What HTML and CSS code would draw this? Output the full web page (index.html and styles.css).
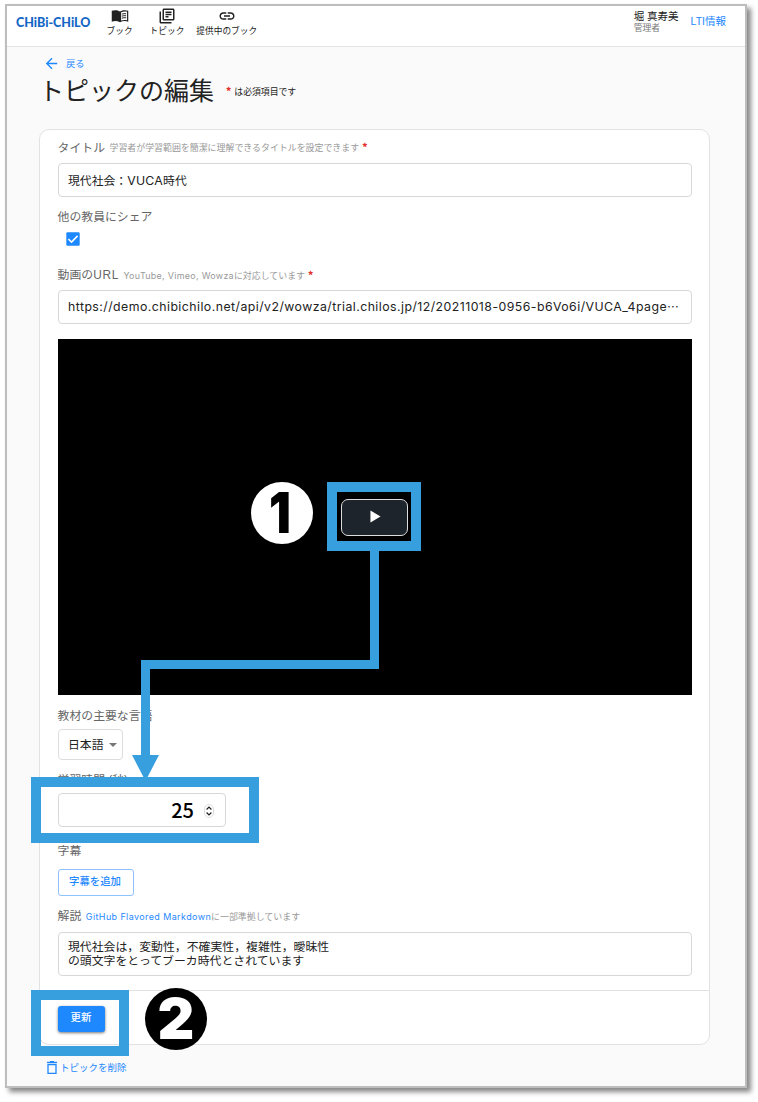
FILE: index.html
```html
<!DOCTYPE html>
<html lang="ja">
<head>
<meta charset="utf-8">
<title>トピックの編集</title>
<link rel="stylesheet" href="styles.css">
</head>
<body>
<div class="window">
  <header class="appbar">
    <div class="logo">CHiBi-CHiLO</div>
    <nav class="nav">
      <a class="nav-item book"><svg class="nav-icon" viewBox="0 0 24 24"><path d="M12 6C8.500 3.800 4.500 3.800 1 5v14.500c3.500-1.200 7.500-1.200 11 .7z" fill="#222"/><path d="M12 6c3.500-2.200 7.500-2.200 11-1v14.500c-3.500-1.200-7.500-1.200-11 .7zM21.400 6.200c-2.700-.6-5.600-.3-7.900.8v11c2.500-.9 5.300-1 7.900-.4z" fill="#222" fill-rule="evenodd"/><path d="M14.500 9.500c2-.7 3.800-.8 5.700-.5M14.500 12.200c2-.7 3.800-.8 5.700-.5M14.500 14.900c2-.7 3.800-.8 5.700-.5" fill="none" stroke="#222" stroke-width="1.300"/></svg><span>ブック</span></a>
      <a class="nav-item topic"><svg class="nav-icon" viewBox="0 0 24 24" fill="#222"><path d="M4 6H2v14c0 1.100.9 2 2 2h14v-2H4V6zm16-4H8c-1.100 0-2 .9-2 2v12c0 1.100.9 2 2 2h12c1.100 0 2-.9 2-2V4c0-1.100-.9-2-2-2zm0 14H8V4h12v12zM10 9h8v2h-8zm0 3h4v2h-4zm0-6h8v2h-8z"/></svg><span>トピック</span></a>
      <a class="nav-item shared"><svg class="nav-icon" viewBox="0 0 24 24" fill="#222"><path d="M3.900 12c0-1.710 1.390-3.100 3.100-3.100h4V7H7c-2.760 0-5 2.240-5 5s2.240 5 5 5h4v-1.900H7c-1.710 0-3.100-1.390-3.100-3.100zM8 13h8v-2H8v2zm9-6h-4v1.900h4c1.710 0 3.100 1.390 3.100 3.100s-1.390 3.100-3.100 3.100h-4V17h4c2.760 0 5-2.240 5-5s-2.240-5-5-5z"/></svg><span>提供中のブック</span></a>
    </nav>
    <div class="user"><span class="user-name">堀 真寿美</span><span class="user-role">管理者</span></div>
    <a class="lti">LTI情報</a>
  </header>
  <main class="main">
    <a class="back"><svg class="back-icon" viewBox="0 0 24 24" fill="#1e88ff"><path d="M20 11H7.830l5.590-5.590L12 4l-8 8 8 8 1.410-1.410L7.830 13H20z"/></svg><span>戻る</span></a>
    <div class="heading"><h1 class="title">トピックの編集</h1><span class="star">*</span><span class="required">は必須項目です</span></div>
    <section class="card">
      <div class="form">
        <label class="label l-title">タイトル<span class="hint">学習者が学習範囲を簡潔に理解できるタイトルを設定できます</span><span class="star">*</span></label>
        <div class="input">現代社会：<span class="vuca">VUCA</span>時代</div>
        <label class="label l-share">他の教員にシェア</label>
        <div class="check"><svg viewBox="0 0 14 14"><rect x=".3" y=".3" width="13.400" height="13.400" rx="1.300" fill="#1e88ff"/><path d="M2.400 7l3.100 3.100 6.100-6.200" fill="none" stroke="#fff" stroke-width="1.500"/></svg></div>
        <label class="label l-url">動画の<span class="url-word">URL</span><span class="hint hint-url"><span class="services">YouTube, Vimeo, Wowza</span>に対応しています</span><span class="star">*</span></label>
        <div class="input url"><span class="address">https://demo.chibichilo.net/api/v2/wowza/trial.chilos.jp/12/20211018-0956-b6Vo6i/VUCA_4page</span><span>⋯</span></div>
        <div class="video"><button class="play"><svg viewBox="0 0 12 14"><path d="M.5.500L11.500 7 .5 13.500z" fill="#fff"/></svg></button></div>
        <label class="label l-lang">教材の主要な言語</label>
        <div class="select"><span>日本語</span><i class="caret"></i></div>
        <label class="label l-time">学習時間 (秒)</label>
        <div class="input number"><span class="seconds">25</span><svg class="stepper" viewBox="0 0 10 14"><rect x=".5" y=".5" width="9" height="13" rx="4.500" fill="#fff" stroke="#ddd"/><path d="M2.600 5.500L5 3l2.400 2.500M2.600 8.500L5 11l2.400-2.500" fill="none" stroke="#222" stroke-width="1.200"/></svg></div>
        <label class="label l-caption">字幕</label>
        <button class="outlined">字幕を追加</button>
        <label class="label l-desc">解説<span class="hint hint-desc"><a class="gfm">GitHub Flavored Markdown</a>に一部準拠しています</span></label>
        <div class="textarea">現代社会は，変動性，不確実性，複雑性，曖昧性<br>の頭文字をとってブーカ時代とされています</div>
      </div>
      <div class="actions"><button class="submit">更新</button></div>
    </section>
    <a class="delete"><svg class="trash" viewBox="0 0 12 14"><path d="M2 3.500h8V12.300H2z" fill="none" stroke="#1e88ff" stroke-width="1.300"/><path d="M1 1.300h10M4 .7h4" fill="none" stroke="#1e88ff" stroke-width="1.200"/></svg><span>トピックを削除</span></a>
  </main>
</div>
<div class="box box-play"></div>
<div class="box box-time"></div>
<div class="box box-submit"></div>
<svg class="arrow" viewBox="0 0 758 1102"><path d="M374.500 549V664.500H145.500V757" fill="none" stroke="#389fdf" stroke-width="9"/><path d="M132 755h27l-13.500 26z" fill="#389fdf"/></svg>
<div class="badge badge-one"><span>1</span></div>
<div class="badge badge-two"><span>2</span></div>
</body>
</html>
```
FILE: styles.css
```css
* { box-sizing: border-box; }
body {
  margin: 0; width: 758px; height: 1102px; padding: 4px 0 0 5px;
  position: relative; overflow: hidden; background: #fff; color: #222;
  font-family: "Liberation Sans", "Noto Sans CJK JP", sans-serif;
}
button { font: inherit; margin: 0; padding: 0; border: 0; }
svg { display: block; }
span, a { white-space: nowrap; }

.window {
  width: 742px; height: 1084px; border: 2px solid #bdbdbd;
  background: #fafafa; box-shadow: 4px 4px 5px #888;
}
.appbar {
  display: flex; height: 41px; background: #fff; border-bottom: 1px solid #e4e4e4;
}
.logo {
  width: 74px; margin: 8px 0 0 9px; font: 900 12.500px/17px Lato, sans-serif;
  color: #1467c5; white-space: nowrap;
}
.nav { display: flex; margin-left: 16.500px; gap: 17px; }
.nav-item { display: flex; flex-direction: column; align-items: center; font-size: 8.700px; line-height: 12px; }
.nav-icon { width: 18px; height: 18px; margin-top: 1px; }
.shared { margin-left: -5px; }
.user { display: flex; flex-direction: column; margin: 4px 0 0 auto; }
.user-name { font-size: 10.500px; line-height: 13px; }
.user-role { font-size: 8.800px; line-height: 11px; color: #777; }
.lti { margin: 8px 19px 0 12px; font-size: 10.500px; line-height: 15px; color: #1e88ff; }

.main { padding-left: 32px; }
.back { display: flex; align-items: center; height: 16px; margin: 8px 0 0 4px; color: #1e88ff; font-size: 9.300px; }
.back-icon { width: 17px; height: 17px; margin: 1px 6px 0 0; }
.heading { display: flex; align-items: center; height: 40px; }
.title { margin: 0; font-size: 25px; font-weight: 400; line-height: 40px; height: 40px; }
.star { color: #e5302c; font: 900 10px/12px "Noto Sans CJK JP", sans-serif; }
.heading .star { margin: 0 0 1px 12px; }
.required { font-size: 8.850px; margin: 1px 0 0 3px; }

.card {
  width: 671px; height: 916px; margin-top: 18px;
  border: 1px solid #e2e2e2; border-radius: 10px; background: #fff;
}
.form { display: flex; flex-direction: column; align-items: flex-start; padding: 0 17px 0 18px; height: 860px; }
.label {
  display: flex; align-items: center; margin-left: -.4px; color: #666;
  font-size: 11.850px; line-height: 16px; white-space: nowrap;
}
.label .star { margin: 0 0 1px 3px; }
.hint { color: #999; font-size: 8.930px; margin: 1px 0 0 4.500px; }
.l-title { height: 33px; padding-top: 2px; }
.l-share { height: 35px; padding-top: 5px; }
.l-url { height: 44px; padding-top: 14px; }
.l-lang { height: 34px; padding-top: 8px; }
.l-time { height: 33px; padding-top: 7px; }
.l-caption { height: 42px; padding-top: 6px; }
.l-desc { height: 36px; padding-top: 4px; }
.input {
  width: 634px; height: 34px; padding-left: 9px; line-height: 33px;
  border: 1px solid #d8d8d8; border-radius: 4px; font-size: 11.850px; white-space: nowrap;
}
.vuca { font-family: Inter, sans-serif; font-size: 12.300px; letter-spacing: .25px; }
.url-word { letter-spacing: .7px; }
.services { font-family: Inter, sans-serif; letter-spacing: .3px; }
.url { margin-bottom: 15px; }
.address { font: 12.300px Inter, sans-serif; letter-spacing: .455px; }
.check { width: 14px; height: 14px; margin-left: 8px; }
.video { display: flex; width: 634px; height: 356px; background: #000; }
.play {
  display: flex; align-items: center; justify-content: center; width: 67px; height: 37px;
  margin: 160px 0 0 283px; background: #1d242b; border: 1px solid #ddd; border-radius: 7px;
}
.play svg { width: 11px; height: 13px; margin: 0 0 2px 2px; }
.select {
  display: flex; align-items: center; width: 65px; height: 31px; padding: 0 0 2px 9px;
  border: 1px solid #ddd; border-radius: 4px; font-size: 11.850px;
}
.caret { margin: 2px 0 0 5px; border: 4px solid transparent; border-top: 4px solid #777; border-bottom: 0; }
.number {
  display: flex; align-items: center; width: 168px; justify-content: flex-end;
  padding-right: 11px; color: #000; font: 500 20px "Noto Sans CJK JP", sans-serif;
}
.seconds { margin-bottom: 2px; }
.stepper { width: 10px; height: 14px; margin: 1px 0 0 10px; }
.outlined {
  width: 76px; height: 27px; padding-right: 2px; border: 1px solid #8fc3ff; border-radius: 3px;
  background: #fff; color: #1e88ff; font-size: 10.400px; font-weight: 500; line-height: 22px;
}
.outlined, .submit { display: block; padding-bottom: 2px; }
.gfm { color: #1e88ff; font-family: Inter, sans-serif; letter-spacing: .43px; }
.textarea {
  width: 634px; height: 44px; padding: 7px 9px; border: 1px solid #d8d8d8;
  border-radius: 4px; font-size: 11.880px; line-height: 14px;
}
.actions { height: 54px; padding: 15px 0 0 18px; border-top: 1px solid #e2e2e2; }
.submit {
  width: 47px; height: 26px; padding-right: 1px; border-radius: 3px; background: #1e88ff;
  box-shadow: 0 1px 3px #777; color: #fff; font-size: 10.400px; font-weight: 500; line-height: 24px;
}
.delete { display: flex; align-items: center; height: 16px; margin: 14px 0 0 7px; color: #1e88ff; font-size: 9.500px; }
.trash { width: 12px; height: 14px; margin: 2px 2px 0 0; }

/* Step annotations drawn over the page */
.box { position: absolute; border: 10px solid #389fdf; }
.box-play { left: 327px; top: 482px; width: 94px; height: 69px; }
.box-time { left: 31px; top: 777px; width: 228px; height: 66px; }
.box-submit { left: 31px; top: 990px; width: 98px; height: 66px; }
.arrow { position: absolute; left: 0; top: 0; width: 758px; height: 1102px; }
.badge {
  position: absolute; display: flex; align-items: center; justify-content: center;
  width: 62px; height: 62px; border-radius: 50%; font: 900 57px/62px Inter, sans-serif;
}
.badge-one { left: 251px; top: 481.500px; background: #fff; color: #000; }
.badge-one span { transform: scaleX(.85); margin-right: 4px; }
.badge-two { left: 145px; top: 988px; background: #000; color: #fff; }
```
